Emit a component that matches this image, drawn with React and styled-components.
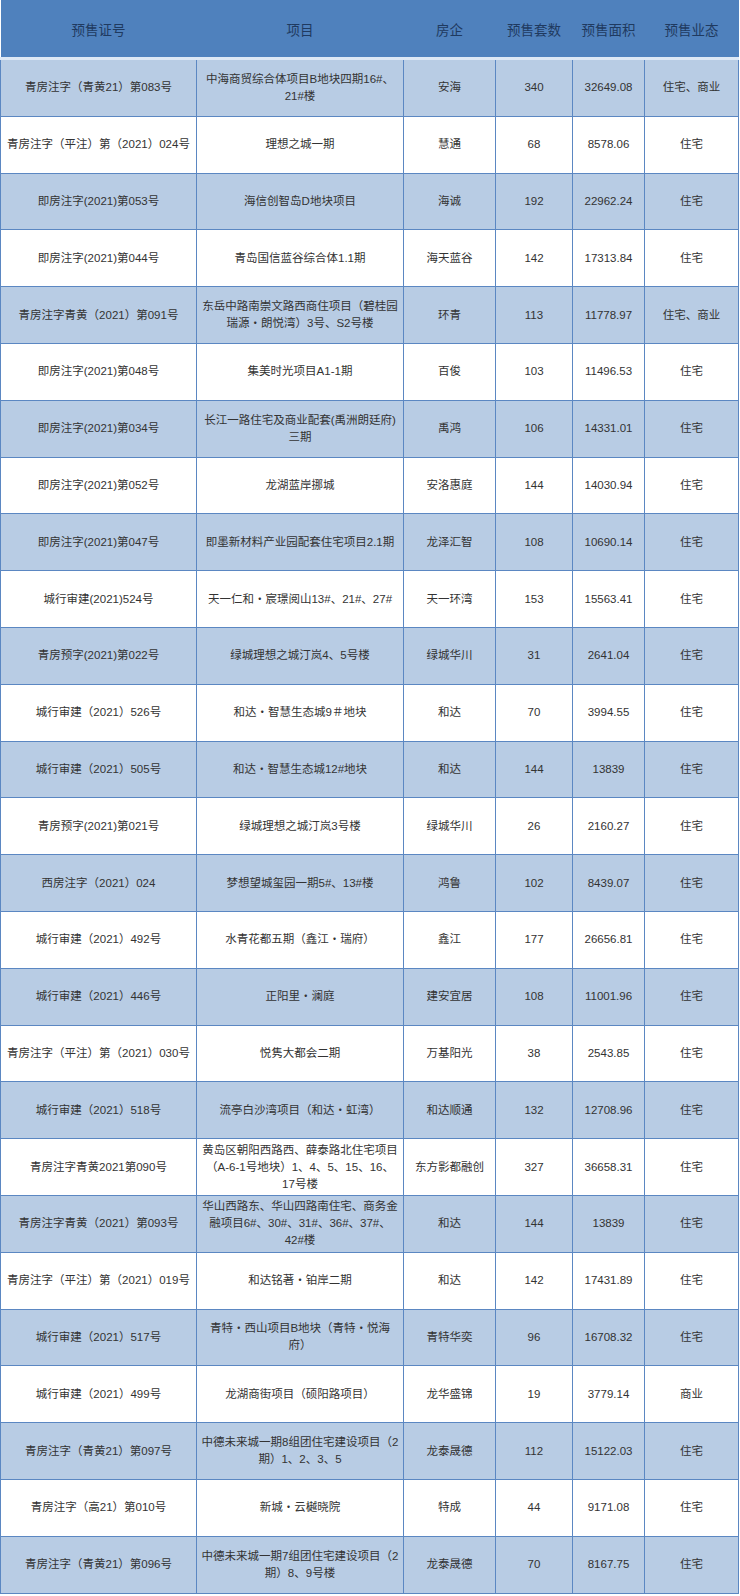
import React from "react";
import styled, { createGlobalStyle } from "styled-components";

const GlobalStyle = createGlobalStyle`
  html, body {
    margin: 0;
    padding: 0;
    background: #ffffff;
  }
  body {
    font-family: "Liberation Sans", "Noto Sans CJK SC", sans-serif;
  }
`;

const columns = [
  { title: "预售证号", width: 196 },
  { title: "项目", width: 207 },
  { title: "房企", width: 92 },
  { title: "预售套数", width: 77 },
  { title: "预售面积", width: 72 },
  { title: "预售业态", width: 94 },
];

const rows = [
  ["青房注字（青黄21）第083号", "中海商贸综合体项目B地块四期16#、21#楼", "安海", "340", "32649.08", "住宅、商业"],
  ["青房注字（平注）第（2021）024号", "理想之城一期", "慧通", "68", "8578.06", "住宅"],
  ["即房注字(2021)第053号", "海信创智岛D地块项目", "海诚", "192", "22962.24", "住宅"],
  ["即房注字(2021)第044号", "青岛国信蓝谷综合体1.1期", "海天蓝谷", "142", "17313.84", "住宅"],
  ["青房注字青黄（2021）第091号", "东岳中路南崇文路西商住项目（碧桂园瑞源・朗悦湾）3号、S2号楼", "环青", "113", "11778.97", "住宅、商业"],
  ["即房注字(2021)第048号", "集美时光项目A1-1期", "百俊", "103", "11496.53", "住宅"],
  ["即房注字(2021)第034号", "长江一路住宅及商业配套(禹洲朗廷府)三期", "禹鸿", "106", "14331.01", "住宅"],
  ["即房注字(2021)第052号", "龙湖蓝岸挪城", "安洛惠庭", "144", "14030.94", "住宅"],
  ["即房注字(2021)第047号", "即墨新材料产业园配套住宅项目2.1期", "龙泽汇智", "108", "10690.14", "住宅"],
  ["城行审建(2021)524号", "天一仁和・宸璟阅山13#、21#、27#", "天一环湾", "153", "15563.41", "住宅"],
  ["青房预字(2021)第022号", "绿城理想之城汀岚4、5号楼", "绿城华川", "31", "2641.04", "住宅"],
  ["城行审建（2021）526号", "和达・智慧生态城9＃地块", "和达", "70", "3994.55", "住宅"],
  ["城行审建（2021）505号", "和达・智慧生态城12#地块", "和达", "144", "13839", "住宅"],
  ["青房预字(2021)第021号", "绿城理想之城汀岚3号楼", "绿城华川", "26", "2160.27", "住宅"],
  ["西房注字（2021）024", "梦想望城玺园一期5#、13#楼", "鸿鲁", "102", "8439.07", "住宅"],
  ["城行审建（2021）492号", "水青花都五期（鑫江・瑞府）", "鑫江", "177", "26656.81", "住宅"],
  ["城行审建（2021）446号", "正阳里・澜庭", "建安宜居", "108", "11001.96", "住宅"],
  ["青房注字（平注）第（2021）030号", "悦隽大都会二期", "万基阳光", "38", "2543.85", "住宅"],
  ["城行审建（2021）518号", "流亭白沙湾项目（和达・虹湾）", "和达顺通", "132", "12708.96", "住宅"],
  ["青房注字青黄2021第090号", "黄岛区朝阳西路西、薛泰路北住宅项目（A-6-1号地块）1、4、5、15、16、17号楼", "东方影都融创", "327", "36658.31", "住宅"],
  ["青房注字青黄（2021）第093号", "华山西路东、华山四路南住宅、商务金融项目6#、30#、31#、36#、37#、42#楼", "和达", "144", "13839", "住宅"],
  ["青房注字（平注）第（2021）019号", "和达铭著・铂岸二期", "和达", "142", "17431.89", "住宅"],
  ["城行审建（2021）517号", "青特・西山项目B地块（青特・悦海府）", "青特华奕", "96", "16708.32", "住宅"],
  ["城行审建（2021）499号", "龙湖商街项目（硕阳路项目）", "龙华盛锦", "19", "3779.14", "商业"],
  ["青房注字（青黄21）第097号", "中德未来城一期8组团住宅建设项目（2期）1、2、3、5", "龙泰晟德", "112", "15122.03", "住宅"],
  ["青房注字（高21）第010号", "新城・云樾晓院", "特成", "44", "9171.08", "住宅"],
  ["青房注字（青黄21）第096号", "中德未来城一期7组团住宅建设项目（2期）8、9号楼", "龙泰晟德", "70", "8167.75", "住宅"],
];

const Page = styled.div`
  width: 740px;
  background: #ffffff;
`;

const Table = styled.table`
  width: 738px;
  table-layout: fixed;
  border-collapse: collapse;
`;

const HeadCell = styled.th`
  height: 57px;
  padding: 0;
  background: #4f81bd;
  color: #1f3a60;
  font-size: 13.5px;
  font-weight: normal;
  text-align: center;
  vertical-align: middle;
  border-bottom: 3px solid #dde8f5;
`;

const Row = styled.tr`
  background: ${(p) => (p.$shaded ? "#b8cce4" : "#ffffff")};
`;

const Cell = styled.td`
  height: 55.8px;
  padding: 0 4.5px;
  border: 1.5px solid #5b87c2;
  color: #333333;
  font-size: 11.5px;
  line-height: 17px;
  text-align: center;
  vertical-align: middle;
  overflow-wrap: anywhere;
`;

export default function App() {
  return (
    <Page>
      <GlobalStyle />
      <Table>
        <colgroup>
          {columns.map((c) => (
            <col key={c.title} style={{ width: c.width }} />
          ))}
        </colgroup>
        <thead>
          <tr>
            {columns.map((c) => (
              <HeadCell key={c.title}>{c.title}</HeadCell>
            ))}
          </tr>
        </thead>
        <tbody>
          {rows.map((r, i) => (
            <Row key={i} $shaded={i % 2 === 0}>
              {r.map((v, j) => (
                <Cell key={j}>{v}</Cell>
              ))}
            </Row>
          ))}
        </tbody>
      </Table>
    </Page>
  );
}
